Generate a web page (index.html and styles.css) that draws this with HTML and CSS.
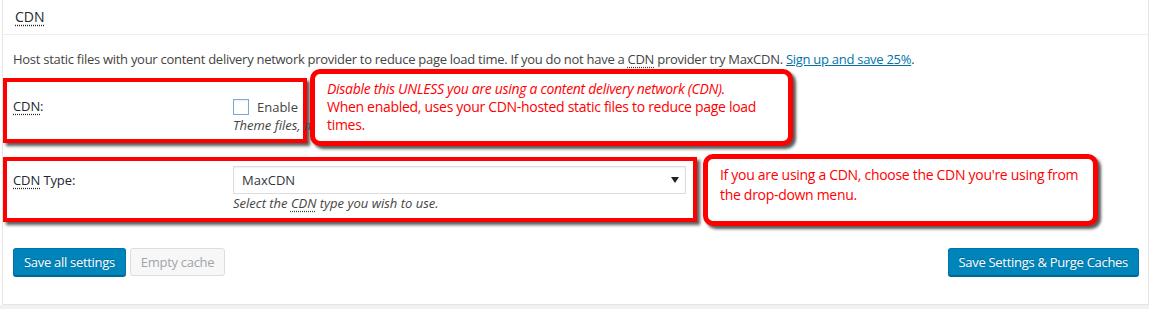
FILE: index.html
```html
<!DOCTYPE html>
<html lang="en">
<head>
<meta charset="utf-8">
<title>CDN settings</title>
<link rel="stylesheet" href="styles.css">
</head>
<body>
<div class="wrap">
  <div class="postbox">
    <h3 class="hndle"><abbr title="Content Delivery Network">CDN</abbr></h3>
    <div class="inside">
      <p class="intro">Host static files with your content delivery network provider to reduce page load time. If you do not have a <abbr title="Content Delivery Network">CDN</abbr> provider try MaxCDN. <a href="#">Sign up and save 25%</a>.</p>
      <div class="form-table">
        <div class="row row-enable">
          <div class="th"><abbr title="Content Delivery Network">CDN</abbr>:</div>
          <div class="td">
            <label class="check"><span class="cb"></span>Enable</label>
            <p class="desc">Theme files, media library attachments, CSS, JS files etc will appear on the CDN.</p>
          </div>
        </div>
        <div class="callout callout-enable">
          <em>Disable this UNLESS you are using a content delivery network (CDN).</em><br>When enabled, uses your CDN-hosted static files to reduce page load times.
        </div>
        <div class="row row-type">
          <div class="th"><abbr title="Content Delivery Network">CDN</abbr> Type:</div>
          <div class="td">
            <div class="select"><span>MaxCDN</span><span class="arrow"></span></div>
            <p class="desc">Select the <abbr title="Content Delivery Network">CDN</abbr> type you wish to use.</p>
          </div>
        </div>
        <div class="callout callout-type">
          If you are using a CDN, choose the CDN you're using from the drop-down menu.
        </div>
      </div>
      <div class="actions">
        <div class="group">
          <button class="btn btn-primary">Save all settings</button>
          <button class="btn btn-disabled">Empty cache</button>
        </div>
        <button class="btn btn-primary">Save Settings &amp; Purge Caches</button>
      </div>
    </div>
  </div>
</div>
</body>
</html>
```
FILE: styles.css
```css
html, body {
  margin: 0;
  height: 309px;
}
body {
  background: #f1f1f1;
  font-family: "Open Sans", "Noto Sans", sans-serif;
  font-size: 13px;
  color: #444;
  overflow: hidden;
}
.wrap {
  background: #fff;
  padding-left: 2px;
}
.postbox {
  background: #fff;
  border: 1px solid #e5e5e5;
  border-top: 0;
}
abbr {
  text-decoration: underline dotted;
  text-underline-offset: 3px;
}
.hndle {
  margin: 0;
  height: 34px;
  padding: 0 12px;
  font-size: 14px;
  font-weight: 400;
  line-height: 34px;
  color: #23282d;
  border-bottom: 1px solid #eee;
}
.inside {
  padding-bottom: 28px;
}
.intro {
  margin: 15px 0 10px;
  padding-left: 10px;
  line-height: 18px;
  letter-spacing: -0.28px;
}
.intro a {
  color: #0073aa;
}
.form-table {
  position: relative;
}
.row {
  display: flex;
  border: 4px solid #f00;
  box-shadow: 3px 3px 3px rgba(0, 0, 0, 0.65);
  color: #23282d;
}
.th {
  flex: 0 0 220px;
  padding-left: 6px;
  font-weight: 500;
  font-size: 13px;
  letter-spacing: -0.1px;
}
.td {
  flex: 1 1 auto;
  min-width: 0;
  white-space: nowrap;
}
.row-enable {
  width: 296px;
  height: 57px;
}
.row-enable .th {
  padding-top: 14px;
  line-height: 20px;
}
.row-enable .td {
  padding-top: 15px;
}
.check {
  display: flex;
  align-items: center;
  gap: 8px;
  line-height: 20px;
  height: 20px;
  color: #444;
}
.cb {
  width: 14px;
  height: 14px;
  border: 1px solid #7fa7d2;
  background: #fff;
  box-shadow: inset 0 1px 2px rgba(0, 0, 0, 0.07);
}
.desc {
  margin: 0;
  font-style: italic;
  line-height: 17px;
  color: #444;
}
.row-type {
  width: 686px;
  height: 57px;
  margin-top: 14px;
}
.row-type .th {
  padding-top: 5px;
  line-height: 28px;
}
.row-type .td {
  padding-top: 5px;
  padding-right: 7px;
}
.select {
  display: flex;
  align-items: center;
  justify-content: space-between;
  height: 26px;
  border: 1px solid #ddd;
  padding: 0 6px 0 8px;
  box-shadow: inset 0 1px 2px rgba(0, 0, 0, 0.07);
  color: #32373c;
}
.arrow {
  width: 0;
  height: 0;
  border-left: 4px solid transparent;
  border-right: 4px solid transparent;
  border-top: 6px solid #222;
}
.row-type .desc {
  margin-top: 1px;
}
.callout {
  position: absolute;
  background: #fff;
  border: 5px solid #f00;
  border-radius: 10px;
  box-shadow: 3px 3px 3px rgba(0, 0, 0, 0.65);
  color: #f00;
  font-size: 14px;
  letter-spacing: -0.3px;
  box-sizing: border-box;
}
.callout-enable {
  left: 307px;
  top: -9px;
  width: 483px;
  height: 77px;
  padding: 6px 8px 0 12px;
  line-height: 18px;
}
.callout-type {
  left: 700px;
  top: 76px;
  width: 395px;
  height: 72px;
  padding: 6px 6px 0 12px;
  line-height: 20px;
}
.actions {
  display: flex;
  justify-content: space-between;
  align-items: center;
  margin-top: 26px;
  padding: 0 9px 0 10px;
}
.group {
  display: flex;
  gap: 4px;
}
.btn {
  height: 28px;
  padding: 0 10px;
  border-radius: 3px;
  font-family: inherit;
  font-size: 13px;
  letter-spacing: -0.3px;
  line-height: 26px;
  cursor: pointer;
}
.btn-primary {
  background: #0085ba;
  border: 1px solid #0073aa;
  border-bottom-color: #006799;
  box-shadow: 0 1px 0 #006799;
  color: #fff;
  text-shadow: 0 -1px 1px #006799;
}
.btn-disabled {
  background: #f7f7f7;
  border: 1px solid #ddd;
  color: #a0a5aa;
}
```
